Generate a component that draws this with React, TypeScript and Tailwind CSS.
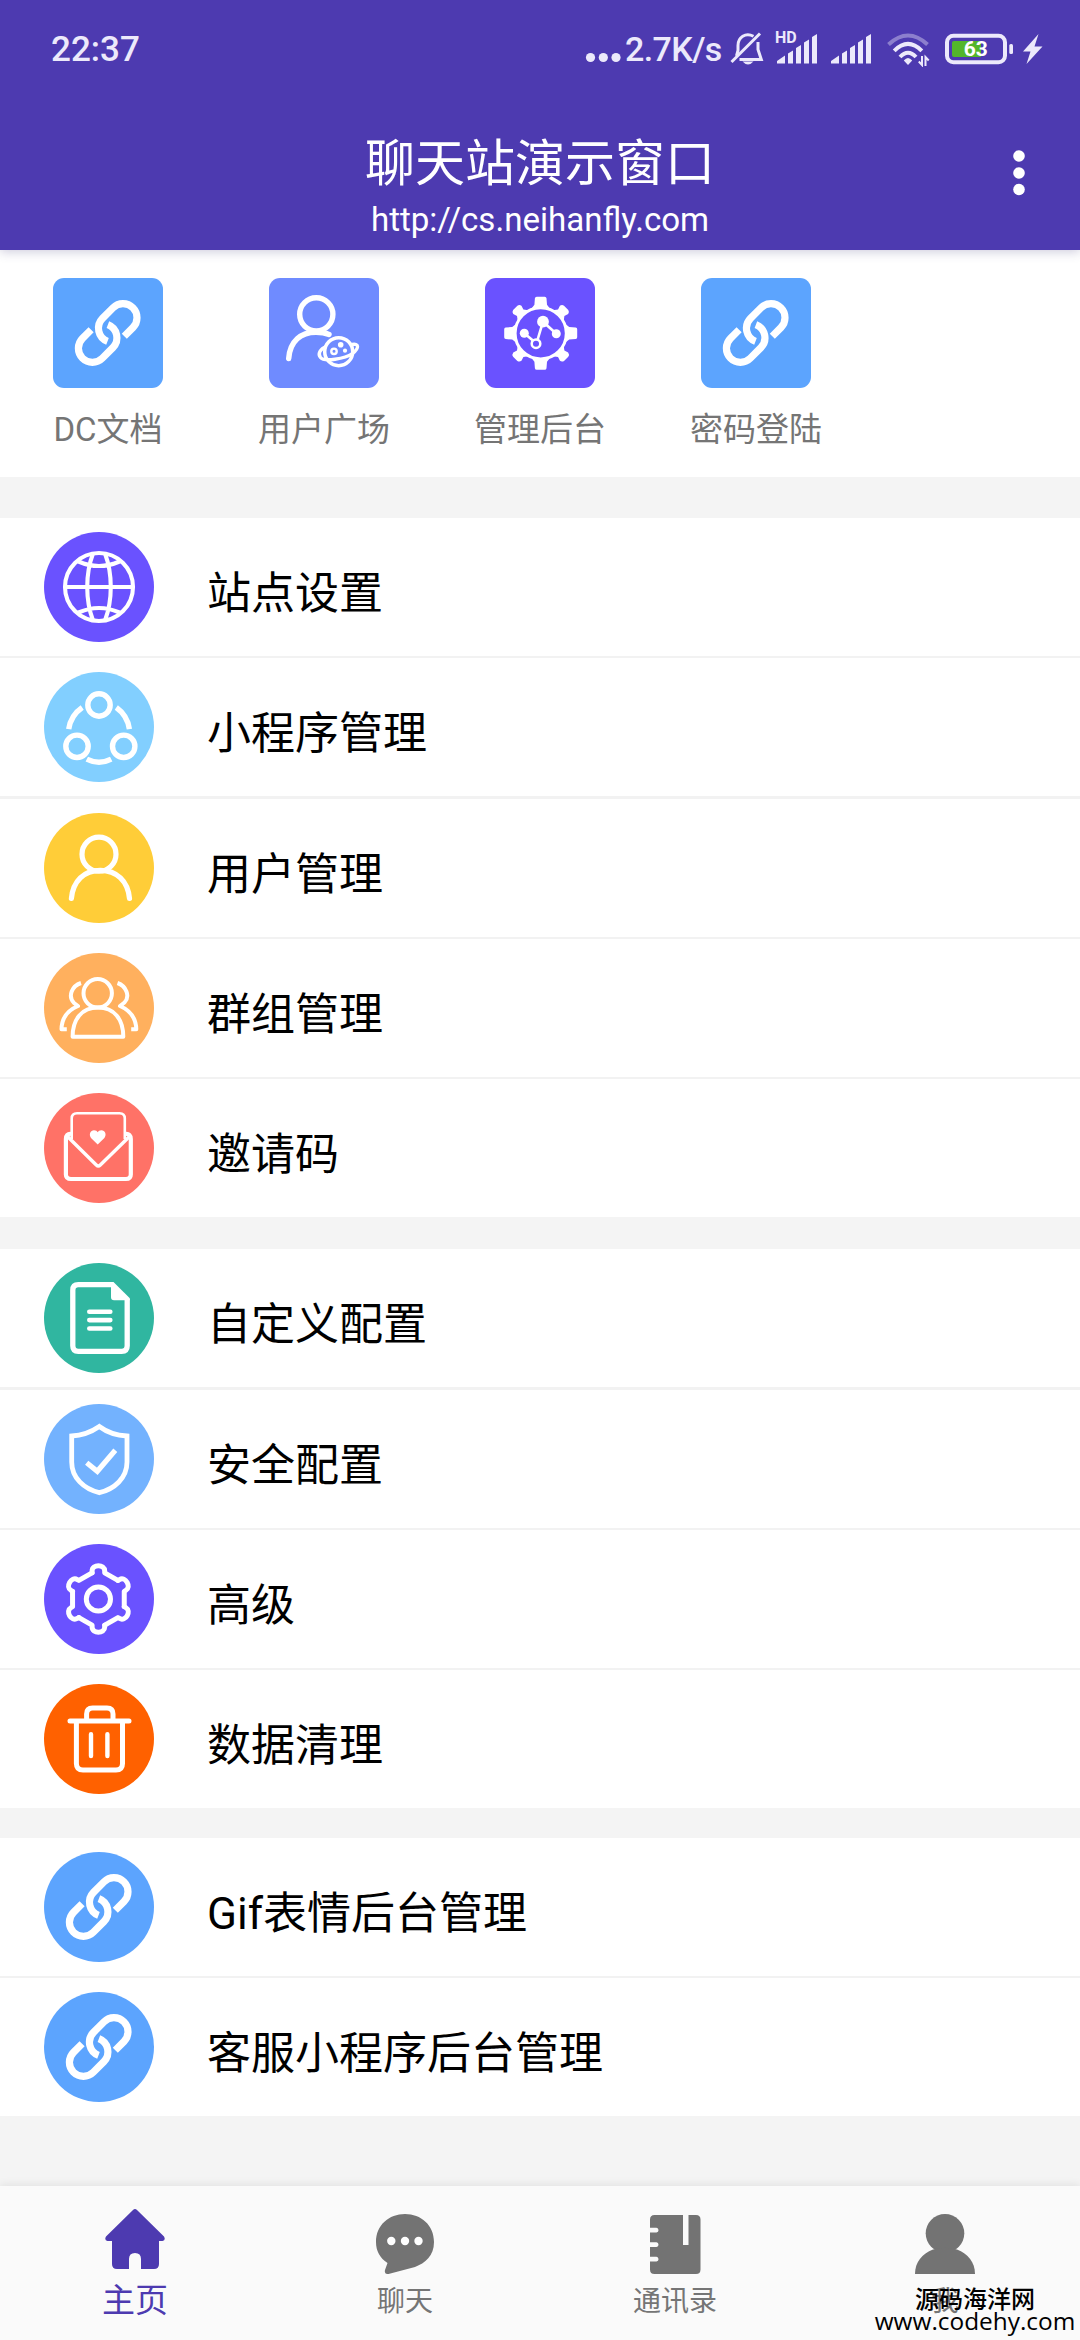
import type { ReactNode } from "react";

/* ---------- Menu icons, all on a 110 x 110 canvas ---------- */

function Glyph({ children }: { children: ReactNode }) {
  return (
    <svg viewBox="0 0 110 110" className="size-[110px]" fill="none" stroke="#fff">
      {children}
    </svg>
  );
}

const LinkIcon = () => (
  <Glyph>
    <g strokeWidth="7.2">
      <path d="M71.3 58.2L79.9 49.6A14 14 0 0 0 60.1 29.8L49.5 40.4A14 14 0 0 0 54.5 63.3" />
      <path d="M38.1 51.8L29.5 60.4A14 14 0 0 0 49.3 80.2L59.9 69.6A14 14 0 0 0 54.9 46.7" />
    </g>
  </Glyph>
);

const PlanetUserIcon = () => (
  <Glyph>
    <g strokeWidth="5.4" strokeLinecap="round">
      <circle cx="47.3" cy="36.3" r="16.6" />
      <path d="M19.7 80.5C21 63 32 54.3 47 54.3C52 54.3 56 54.8 60 56.5" />
    </g>
    <circle cx="69.7" cy="73.7" r="14" strokeWidth="3.5" />
    <path d="M57.5 68.5C51 70.500 48.500 76 51.500 79.500C55 84 76 81 83.500 75.500C90.500 70 90 65 83 66.500" strokeWidth="3.4" />
    <circle cx="65" cy="73.3" r="2.7" strokeWidth="2.4" />
    <circle cx="71.7" cy="66.7" r="2.8" fill="#fff" stroke="none" />
    <circle cx="76" cy="72.7" r="2.1" fill="#fff" stroke="none" />
  </Glyph>
);

const ChartGearIcon = () => (
  <Glyph>
    <g transform="translate(55.7 55.3)">
      <circle r="25.6" strokeWidth="3" />
      <g fill="#fff" stroke="none">
        {[0, 90, 180, 270].map((a) => (
          <path key={a} transform={`rotate(${a})`} d="M-9 -25L-6.3 -28.5L-5.8 -35Q-5.6 -36.5 -4 -36.5H4Q5.6 -36.5 5.8 -35L6.3 -28.5L9 -25Z" />
        ))}
        {[45, 135, 225, 315].map((a) => (
          <path key={a} transform={`rotate(${a})`} d="M-7.5 -25L-4.5 -29L-5.8 -33Q-5.5 -35.5 -3 -36H3Q5.5 -35.5 5.8 -33L4.5 -29L7.5 -25Z" />
        ))}
      </g>
    </g>
    <path d="M39.3 55.3L48.5 63M52.5 62L58 43.7L71.3 55.7" strokeWidth="2.6" />
    <circle cx="51" cy="65.7" r="4.3" strokeWidth="2.5" />
    <g fill="#fff" stroke="none">
      <circle cx="39.3" cy="55.3" r="4.5" />
      <circle cx="58" cy="43.7" r="5.9" />
      <circle cx="71.3" cy="55.7" r="4.5" />
    </g>
  </Glyph>
);

const GlobeIcon = () => (
  <Glyph>
    <g strokeWidth="4.1">
      <circle cx="55" cy="55" r="34" />
      <path d="M21 55H89M49 21.5C41.3 42 41.3 68 49 88.5M61 21.5C68.7 42 68.7 68 61 88.5M34.5 29.5Q55 38.5 75.5 29.5M34.5 80.5Q55 71.5 75.5 80.5" />
    </g>
  </Glyph>
);

const MiniAppIcon = () => (
  <Glyph>
    <g strokeWidth="5.4">
      <circle cx="55" cy="33" r="11.2" />
      <circle cx="33" cy="74.3" r="11.2" />
      <circle cx="79.7" cy="74.3" r="11.2" />
      <path d="M24.7 57.2A32 32 0 0 1 38.2 35.5M85.4 57.2A32 32 0 0 0 72.3 35.5M42.8 87.2Q55 93.3 67.2 87.2" />
    </g>
  </Glyph>
);

const UserIcon = () => (
  <Glyph>
    <g strokeWidth="5.2" strokeLinecap="round">
      <circle cx="55" cy="41.2" r="17" />
      <path d="M27.4 85.5C29 68 40 57.3 56.3 57.3S84 68 85.5 85.5" />
    </g>
  </Glyph>
);

const GroupIcon = () => (
  <Glyph>
    <g strokeWidth="4" strokeLinejoin="round">
      <circle cx="53.7" cy="40.3" r="14.2" />
      <path d="M28.6 83.8C28.6 66 38 54.6 54 54.6S79.3 66 79.3 83.8Z" />
      <path d="M37 30C28 33 23.5 43 30 50L34 53C22 58 17.7 66 17.5 76.3H22.8" />
      <path d="M73.5 30C82 33 86.5 43 80.5 49.5L76 53C87.5 58 92 66 92.3 76.3H87.2" />
    </g>
  </Glyph>
);

const InviteIcon = () => (
  <Glyph>
    <path d="M27.7 46V25.5Q27.7 20.3 33 20.3H75.5Q80.8 20.3 80.8 25.5V46" strokeWidth="2.6" />
    <path d="M27 41Q21.9 40.5 21.9 46V81.5Q21.9 86 27 86H82Q86.8 86 86.8 81.5V46Q86.8 40.5 81.5 41" strokeWidth="4.2" />
    <path d="M23 43L52.3 72Q54.3 74 56.3 72L86 43" strokeWidth="3.4" />
    <path d="M53.7 51.5L47 45C44.5 41.5 46.5 37.3 50 37.3C52 37.3 53 38.2 53.7 39.2C54.4 38.2 55.5 37.3 57.4 37.3C61 37.3 63 41.5 60.4 45Z" fill="#fff" stroke="none" />
  </Glyph>
);

const DocIcon = () => (
  <Glyph>
    <path d="M69 21.7H34.3Q28.8 21.7 28.8 27.2V82.8Q28.8 88.3 34.3 88.3H77.7Q83.2 88.3 83.2 82.8V36" strokeWidth="5.3" />
    <path d="M67 19H69.5L85.8 35.3V37.2H70Q67 37.2 67 34.2Z" fill="#fff" stroke="none" />
    <path d="M45.3 48.7H66.3M45.3 57.1H66.3M45.3 65.5H66.3" strokeWidth="4.6" strokeLinecap="round" />
  </Glyph>
);

const ShieldIcon = () => (
  <Glyph>
    <path d="M55.3 22.5C47 28.2 38 31.5 27.7 32V58C27.7 74 40 85 55.3 88.7C70.5 85 83 74 83 58V32C72 31.5 63 28.2 55.3 22.5Z" strokeWidth="4.8" />
    <path d="M42.7 58.8L53.3 67.3L71.3 46.3" strokeWidth="5.2" />
  </Glyph>
);

const SettingsIcon = () => (
  <Glyph>
    <g transform="translate(54.4 55)" strokeWidth="5" strokeLinejoin="round" strokeLinecap="round">
      <circle r="12.1" />
      {[0, 60, 120, 180, 240, 300].map((a) => (
        <path key={a} transform={`rotate(${a})`} d="M-6.3 -26.2V-28C-6.3 -35 6.3 -35 6.3 -28V-26.2L19.5 -18.6" />
      ))}
    </g>
  </Glyph>
);

const TrashIcon = () => (
  <Glyph>
    <g strokeWidth="5" strokeLinecap="round">
      <path d="M26 37H85M42.6 36V30Q42.6 24 48.6 24H63Q69 24 69 30V36" />
      <path d="M32.4 38V79.5Q32.4 86 39 86H72Q78.5 86 78.5 79.5V38" />
      <path d="M47 50.3V72M63.4 50.3V72" strokeWidth="4.4" />
    </g>
  </Glyph>
);

/* ---------- Data ---------- */

type Item = { label: string; color: string; icon: ReactNode };

const shortcuts: Item[] = [
  { label: "DC文档", color: "bg-[#5ca4fe]", icon: <LinkIcon /> },
  { label: "用户广场", color: "bg-[#6f8bff]", icon: <PlanetUserIcon /> },
  { label: "管理后台", color: "bg-[#6a52ff]", icon: <ChartGearIcon /> },
  { label: "密码登陆", color: "bg-[#5ca4fe]", icon: <LinkIcon /> },
];

const siteItems: Item[] = [
  { label: "站点设置", color: "bg-[#6a52ff]", icon: <GlobeIcon /> },
  { label: "小程序管理", color: "bg-[#82cfff]", icon: <MiniAppIcon /> },
  { label: "用户管理", color: "bg-[#ffcd38]", icon: <UserIcon /> },
  { label: "群组管理", color: "bg-[#ffb05e]", icon: <GroupIcon /> },
  { label: "邀请码", color: "bg-[#ff7267]", icon: <InviteIcon /> },
];

const configItems: Item[] = [
  { label: "自定义配置", color: "bg-[#30b6a0]", icon: <DocIcon /> },
  { label: "安全配置", color: "bg-[#73b2fe]", icon: <ShieldIcon /> },
  { label: "高级", color: "bg-[#6a52ff]", icon: <SettingsIcon /> },
  { label: "数据清理", color: "bg-[#ff6100]", icon: <TrashIcon /> },
];

const extraItems: Item[] = [
  { label: "Gif表情后台管理", color: "bg-[#5ca4fe]", icon: <LinkIcon /> },
  { label: "客服小程序后台管理", color: "bg-[#5ca4fe]", icon: <LinkIcon /> },
];

/* ---------- Status bar ---------- */

function Signal() {
  return (
    <svg viewBox="0 0 40 30" className="w-10 h-[30px]" fill="#ece9fb">
      <path d="M0 29.5V27L8 21.5V29.5ZM11 29.5V19.5L16 16.5V29.5ZM19 29.5V14L24 11V29.5ZM27 29.5V8.5L32 5.5V29.5ZM35 29.5V3L40 0V29.5Z" />
    </svg>
  );
}

function StatusBar() {
  return (
    <div className="h-[98px] flex items-center text-[#ece9fb]">
      <span className="pl-[51px] text-[35px] font-medium leading-none">22:37</span>
      <div className="ml-auto flex items-center pr-[37px]">
        <svg viewBox="0 0 36 34" className="w-9 h-[34px]" fill="#ece9fb">
          <circle cx="5.5" cy="25.5" r="4.6" />
          <circle cx="18.3" cy="25.5" r="4.6" />
          <circle cx="31" cy="25.5" r="4.6" />
        </svg>
        <span className="w-[109px] pl-1 text-[34px] font-medium leading-none tracking-[-0.6px] whitespace-nowrap">2.7K/s</span>
        <svg viewBox="0 0 34 34" className="w-[34px] h-[34px]" fill="none" stroke="#ece9fb" strokeWidth="3">
          <path d="M1.5 30L30 1.5" />
          <path d="M23.5 4.3C15.5 0 8 5.5 8 13.5V18.5L6.5 24" />
          <path d="M28 10V17.5L31.3 27.5H9.5" />
          <path d="M12.5 29.5H23.5Q18 35.5 12.5 29.5Z" fill="#ece9fb" stroke="none" />
        </svg>
        <div className="relative ml-[13px]">
          <Signal />
          <span className="absolute -left-[2px] -top-[4px] text-[16px] font-bold leading-none">HD</span>
        </div>
        <div className="ml-[14px]">
          <Signal />
        </div>
        <svg viewBox="0 0 44 36" className="ml-[15px] w-11 h-9" fill="none" stroke="#ece9fb" strokeWidth="4">
          <path d="M2.5 13.5Q22 -4.5 41.5 13.5" opacity=".4" />
          <path d="M8.2 19.8Q22 6 35.8 19.8" />
          <path d="M14 26Q22 17.5 30 26" />
          <path d="M22 34L17.8 29.5Q22 24.5 26.2 29.5Z" fill="#ece9fb" stroke="none" />
          <path d="M36 25V34L32.8 30.5M39.5 35V26L42.7 29.5" strokeWidth="2" />
        </svg>
        <svg viewBox="0 0 70 32" className="ml-[14px] w-[70px] h-8">
          <rect x="3" y="2.8" width="58" height="26.5" rx="6.5" fill="none" stroke="#ece9fb" strokeWidth="4" />
          <path d="M10 8H37V24H10Q8 24 8 22V10Q8 8 10 8Z" fill="#53b62b" />
          <rect x="65.3" y="11" width="3.7" height="10" rx="1.5" fill="#ece9fb" />
          <text x="31.7" y="23.3" textAnchor="middle" fontSize="21" fontWeight="700" fill="#fff">63</text>
        </svg>
        <svg viewBox="0 0 20 30" className="ml-[9px] w-5 h-[30px]" fill="#ece9fb">
          <path d="M15.5 0L0 17.5H7.5L3.5 30L19.5 12.5H11.5Z" />
        </svg>
      </div>
    </div>
  );
}

/* ---------- Layout pieces ---------- */

function Header() {
  return (
    <header className="relative z-10 h-[250px] bg-[#4d3ab0] text-white shadow-[0_2px_10px_rgba(60,50,120,0.25)]">
      <StatusBar />
      <div className="grid grid-cols-[1fr_auto_1fr] items-start">
        <div className="col-start-2 flex flex-col items-center">
          <h1 className="h-[102px] leading-[133px] text-[50px]">聊天站演示窗口</h1>
          <p className="text-[33.1px] leading-[40px]">http://cs.neihanfly.com</p>
        </div>
        <svg viewBox="0 0 12 46" className="mt-[52px] mr-[55px] w-3 h-[46px] justify-self-end" fill="#fff">
          <circle cx="6" cy="6" r="5.8" />
          <circle cx="6" cy="23" r="5.8" />
          <circle cx="6" cy="39.5" r="5.8" />
        </svg>
      </div>
    </header>
  );
}

function MenuGroup({ items }: { items: Item[] }) {
  return (
    <section className="flex flex-col gap-[2.25px] bg-[#f2f2f2]">
      {items.map((item) => (
        <div key={item.label} className="h-[138px] shrink-0 bg-white flex items-center pl-11">
          <div className={`size-[110px] rounded-full ${item.color}`}>{item.icon}</div>
          <span className="ml-[53px] mt-[14px] text-[44px] leading-none text-black">{item.label}</span>
        </div>
      ))}
    </section>
  );
}

function TabBar() {
  return (
    <nav className="h-[154px] grid grid-cols-4 bg-[#fafafa] text-[28px] text-[#757575] shadow-[0_-2px_8px_rgba(0,0,0,0.07)]">
      <div className="flex flex-col items-center pt-[23px] text-[#4d3ab0]">
        <svg viewBox="0 0 60 60" className="size-[60px]" fill="#4d3ab0">
          <path d="M28 1Q30 -.8 32 1L59 27.5Q61 31 57.5 32H54V55Q54 60 49 60H36V50Q36 44 30 44T24 50V60H12Q7 60 7 55V32H2.500Q-1 31 1 27.5Z" />
        </svg>
        <span className="mt-[15px] text-[33px] leading-none">主页</span>
      </div>
      <div className="flex flex-col items-center pt-7">
        <svg viewBox="0 0 60 60" className="size-[60px]" fill="#737373">
          <path d="M30 0C46 0 59 11 59 28C59 42 50 49 40 53L13.5 60Q9 60.5 10 56L12.5 49C5 44 1 37 1 28C1 11 14 0 30 0Z" />
          <g fill="#fff">
            <circle cx="16.3" cy="27" r="4.2" />
            <circle cx="30" cy="27" r="4.2" />
            <circle cx="43.5" cy="27" r="4.2" />
          </g>
        </svg>
        <span className="mt-[14px] leading-none">聊天</span>
      </div>
      <div className="flex flex-col items-center pt-7">
        <svg viewBox="0 0 60 60" className="size-[60px]" fill="#737373">
          <path d="M9.5 1H38V31H43.5V1H51Q55.5 1 55.5 5.5V55.5Q55.5 60 51 60H9.5Q5 60 5 55.5V47.5H11.5Q13.5 47.3 13.5 45.2T11.5 42.8H5V33H11.5Q13.5 32.8 13.5 30.7T11.5 28.3H5V18.5H11.5Q13.5 18.3 13.5 16.2T11.5 13.8H5V5.5Q5 1 9.5 1Z" />
        </svg>
        <span className="mt-[14px] leading-none">通讯录</span>
      </div>
      <div className="relative flex flex-col items-center pt-7">
        <svg viewBox="0 0 60 60" className="size-[60px]" fill="#737373">
          <circle cx="30" cy="19.3" r="19.3" />
          <path d="M18 35.5Q30 32 42 35.5C53 40 60 48 60 60H0C0 48 7 40 18 35.5Z" />
        </svg>
        <span className="mt-[14px] leading-none">我</span>
        {/* site credit printed over the last tab */}
        <div className="absolute right-[4px] top-[101px] w-[202px] flex flex-col items-center text-black">
          <span className="text-[24px] leading-[26px] font-medium">源码海洋网</span>
          <span className="font-['Open_Sans'] text-[24.4px] leading-[26px] font-medium mt-[-5px]">www.codehy.com</span>
        </div>
      </div>
    </nav>
  );
}

export default function App() {
  return (
    <div className="w-[1080px] h-[2340px] overflow-hidden flex flex-col bg-[#f4f4f4] font-[Roboto,'Noto_Sans_CJK_SC',sans-serif]">
      <Header />
      <section className="h-[227px] shrink-0 bg-white grid grid-cols-5 pt-7">
        {shortcuts.map((s) => (
          <div key={s.label} className="flex flex-col items-center">
            <div className={`size-[110px] rounded-[11px] ${s.color}`}>{s.icon}</div>
            <span className="mt-[25px] text-[33px] leading-none text-[#757575]">{s.label}</span>
          </div>
        ))}
      </section>

      <main className="flex flex-col pt-[41px]">
        <MenuGroup items={siteItems} />
        <div className="h-[32.4px]" />
        <MenuGroup items={configItems} />
        <div className="h-[29.85px]" />
        <MenuGroup items={extraItems} />
      </main>

      <div className="mt-auto">
        <TabBar />
      </div>
    </div>
  );
}
